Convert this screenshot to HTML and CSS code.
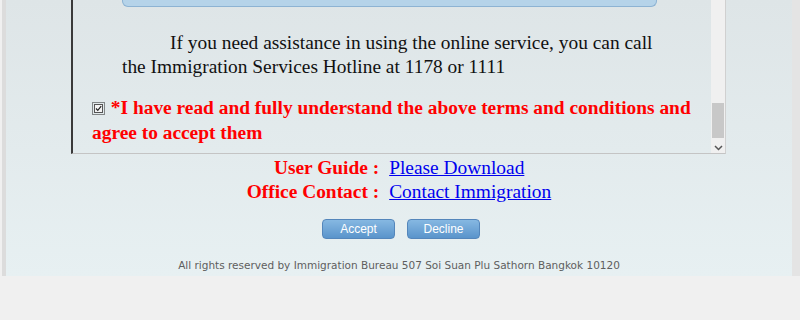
FILE: index.html
```html
<!DOCTYPE html>
<html lang="en">

<head>
    <meta charset="utf-8">
    <title>Immigration Bureau - Terms and Conditions</title>
    <link rel="stylesheet" href="styles.css">
</head>

<body>
    <div class="page">
        <div class="terms">
            <div class="terms-body">
                <div class="notice"></div>
                <p class="help">If you need assistance in using the online service, you can call the Immigration Services Hotline at 1178 or 1111</p>
                <p class="agree">
                    <svg class="check" width="13" height="13" viewBox="0 0 13 13">
                        <rect x="0.5" y="0.5" width="12" height="12" fill="none" stroke="#222" stroke-dasharray="1 1"/>
                        <rect x="2.5" y="2.5" width="8" height="8" fill="#f4f4f4" stroke="#555"/>
                        <path d="M4 6.5 L5.8 8.3 L9.2 4.2" fill="none" stroke="#222" stroke-width="1.2"/>
                    </svg>
                    *I have read and fully understand the above terms and conditions and agree to accept them
                </p>
            </div>
            <div class="scrollbar">
                <div class="track"></div>
                <div class="thumb"></div>
                <div class="track small"></div>
                <div class="arrow">
                    <svg width="9" height="6" viewBox="0 0 9 6">
                        <path d="M1 1 L4.5 4.5 L8 1" fill="none" stroke="#555" stroke-width="1.5"/>
                    </svg>
                </div>
            </div>
        </div>

        <div class="links">
            <span class="label">User Guide :</span>
            <a href="#">Please Download</a>
            <span class="label">Office Contact :</span>
            <a href="#">Contact Immigration</a>
        </div>

        <div class="buttons">
            <button>Accept</button>
            <button>Decline</button>
        </div>

        <p class="footer">All rights reserved by Immigration Bureau 507 Soi Suan Plu Sathorn Bangkok 10120</p>
    </div>
</body>

</html>
```

FILE: styles.css
```css
* {
    margin: 0;
    padding: 0;
    box-sizing: border-box;
}

body {
    background-color: #f0f0f0;
    font-family: 'Liberation Serif', serif;
}

.page {
    margin-left: 6px;
    margin-right: 8px;
    padding-bottom: 4px;
    background: linear-gradient(#dee5e7, #e7f0f2);
    box-shadow: -4px 0 0 #dcdcdc, 8px 0 0 #e4e4e4;
}

.terms {
    display: flex;
    width: 655px;
    height: 154px;
    margin-left: 65px;
    border-left: 2px solid #3a3a3a;
    border-right: 1px solid #d0d0d0;
    border-bottom: 1px solid #c4c4c4;
}

.terms-body {
    flex: 1;
    padding-left: 19px;
}

.notice {
    width: 535px;
    height: 7px;
    margin-left: 30px;
    background-color: #b5d3e9;
    border: 1px solid #8db3d3;
    border-top: none;
    border-radius: 0 0 6px 6px;
}

.help {
    width: 535px;
    margin: 24px 0 0 30px;
    font-size: 19.4px;
    line-height: 24px;
    text-indent: 48px;
    color: #111;
}

.agree {
    margin-top: 16px;
    font-size: 19.4px;
    line-height: 25px;
    font-weight: bold;
    color: #ff0000;
}

.check {
    vertical-align: -1px;
    margin-right: 1px;
}

.scrollbar {
    display: flex;
    flex-direction: column;
    width: 14px;
    background-color: #f0f0f0;
}

.track {
    height: 103px;
}

.track.small {
    height: 5px;
}

.thumb {
    height: 35px;
    margin: 0 1px;
    background-color: #c8c8c8;
}

.arrow {
    display: flex;
    justify-content: center;
    padding-top: 2px;
}

.links {
    display: grid;
    grid-template-columns: auto auto;
    justify-content: center;
    column-gap: 10px;
    margin-top: 2px;
    font-size: 19.4px;
    line-height: 24px;
}

.label {
    text-align: right;
    font-weight: bold;
    color: #ff0000;
}

.links a {
    color: #0000ee;
}

.buttons {
    display: flex;
    justify-content: center;
    gap: 12px;
    margin-top: 15px;
    padding-left: 4px;
}

button {
    width: 73px;
    height: 20px;
    font-family: 'Liberation Sans', sans-serif;
    font-size: 12px;
    color: #fff;
    background: linear-gradient(#86b8e2, #5a94cb);
    border: 1px solid #5486bb;
    border-radius: 4px;
    cursor: pointer;
}

.footer {
    margin-top: 19px;
    text-align: center;
    font-family: 'DejaVu Sans', sans-serif;
    font-size: 10.5px;
    line-height: 14px;
    color: #5e5e5e;
}
```
